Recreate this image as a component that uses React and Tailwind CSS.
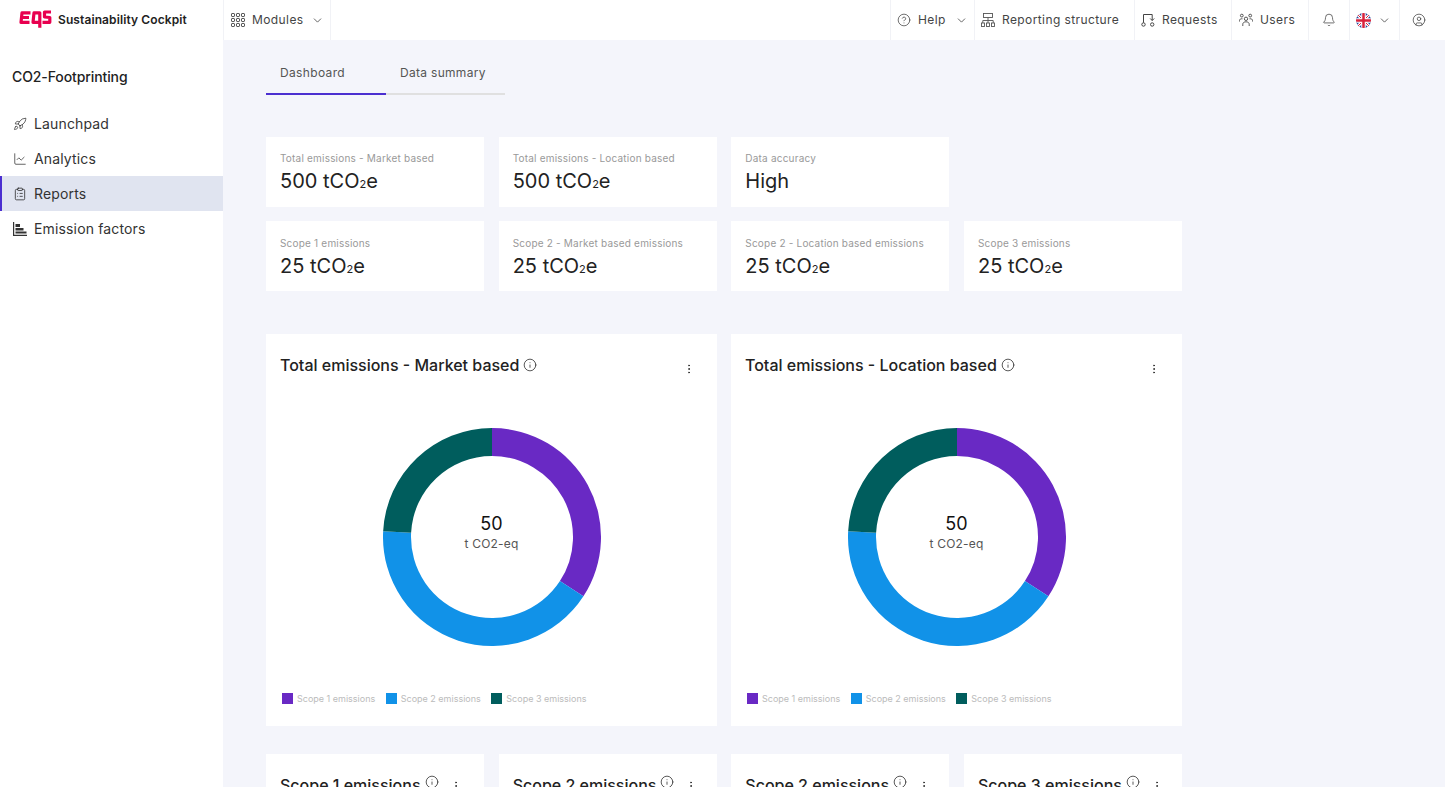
import { ChevronDown, CircleHelp, Bell, CircleUser, Rocket, ChartLine, ClipboardList, Info, EllipsisVertical } from 'lucide-react';

const ROW_ONE = [
  { label: 'Total emissions - Market based', value: '500 tCO' },
  { label: 'Total emissions - Location based', value: '500 tCO' },
  { label: 'Data accuracy', value: 'High', plain: true },
];

const ROW_TWO = [
  { label: 'Scope 1 emissions', value: '25 tCO' },
  { label: 'Scope 2 - Market based emissions', value: '25 tCO' },
  { label: 'Scope 2 - Location based emissions', value: '25 tCO' },
  { label: 'Scope 3 emissions', value: '25 tCO' },
];

const SEGMENTS = [
  { from: 0, to: 123, color: '#6929c4' },
  { from: 123, to: 273, color: '#1192e8' },
  { from: 273, to: 360, color: '#005d5d' },
];

const LEGEND = [
  { label: 'Scope 1 emissions', color: 'bg-[#6929c4]' },
  { label: 'Scope 2 emissions', color: 'bg-[#1192e8]' },
  { label: 'Scope 3 emissions', color: 'bg-[#005d5d]' },
];

function Logo() {
  return (
    <svg width="33" height="20" viewBox="0 0 33 20" fill="none" stroke="#e8004f" strokeWidth="3.2" strokeLinejoin="round">
      <path d="M11.5 2.8H3L2 12.3H10.5M2.5 7.5H10" />
      <path d="M15 2.8H20.8V12.3H14ZM20.8 12V17.8" />
      <path d="M32 2H25.5V7L30.8 7.5V12.3H23.5" />
    </svg>
  );
}

function ModulesIcon() {
  const spots = [0, 5, 10];
  return (
    <svg width="14" height="14" viewBox="0 0 14 14" fill="none" stroke="#333" strokeWidth="1">
      {spots.map((y) => spots.map((x) => <rect key={`${x}-${y}`} x={x + 0.5} y={y + 0.5} width="3" height="3" rx="0.8" />))}
    </svg>
  );
}

function StructureIcon() {
  return (
    <svg width="14" height="14" viewBox="0 0 14 14" fill="none" stroke="#555" strokeWidth="0.9">
      <rect x="2.5" y="0.5" width="9" height="4" />
      <path d="M7 4.5V7.5M1.8 10V7.5H12.2V10M7 7.5V10" />
      <rect x="0.5" y="10" width="3" height="3.5" />
      <rect x="5.5" y="10" width="3" height="3.5" />
      <rect x="10.5" y="10" width="3" height="3.5" />
    </svg>
  );
}

function RequestsIcon() {
  return (
    <svg width="14" height="14" viewBox="0 0 14 14" fill="none" stroke="#444" strokeWidth="1">
      <circle cx="2.5" cy="11.5" r="1.7" />
      <circle cx="11.2" cy="11.5" r="1.7" />
      <path d="M2.5 9.8V1.5H11.2V7.5M9.2 5.5L11.2 7.5L13.2 5.5" />
    </svg>
  );
}

function UsersIcon() {
  return (
    <svg width="14" height="14" viewBox="0 0 14 14" fill="none" stroke="#444" strokeWidth="0.9">
      <circle cx="7" cy="5.8" r="1.7" />
      <circle cx="2.8" cy="2.6" r="1.4" />
      <circle cx="11.2" cy="2.6" r="1.4" />
      <path d="M3.8 13V11.2C3.8 9.8 5 8.8 7 8.8C9 8.8 10.2 9.8 10.2 11.2V13" />
      <path d="M0.5 8.5V7.5C0.5 6.4 1.5 5.5 3.5 5.8M13.5 8.5V7.5C13.5 6.4 12.5 5.5 10.5 5.8" />
    </svg>
  );
}

function FactorsIcon() {
  return (
    <svg width="14" height="14" viewBox="0 0 14 14" fill="#333">
      <path d="M0 0H1.2V12.8H14V14H0Z" />
      <rect x="2.5" y="2" width="4.5" height="3" />
      <rect x="2.5" y="6" width="8" height="2.5" />
      <rect x="2.5" y="9.5" width="11" height="2" />
    </svg>
  );
}

function UkFlag() {
  return (
    <svg width="15" height="15" viewBox="0 0 15 15">
      <clipPath id="flag-clip"><circle cx="7.5" cy="7.5" r="7.5" /></clipPath>
      <g clipPath="url(#flag-clip)">
        <rect width="15" height="15" fill="#2b4a9b" />
        <path d="M0 0L15 15M15 0L0 15" stroke="#fff" strokeWidth="3" />
        <path d="M0 0L15 15M15 0L0 15" stroke="#d8213b" strokeWidth="1" />
        <path d="M7.5 0V15M0 7.5H15" stroke="#fff" strokeWidth="4.5" />
        <path d="M7.5 0V15M0 7.5H15" stroke="#d8213b" strokeWidth="2.5" />
      </g>
    </svg>
  );
}

function NavCell({ className, children }) {
  return (
    <div className={`flex h-full items-center border-l border-[#f1f2f6] text-[12px] tracking-[0.4px] text-[#444] ${className}`}>
      {children}
    </div>
  );
}

function Header() {
  return (
    <header className="flex h-10 shrink-0 items-center bg-white">
      <div className="flex w-[223px] shrink-0 items-center pl-[19px]">
        <Logo />
        <span className="ml-[6px] text-[12px] font-semibold tracking-[0.1px] text-[#222]">Sustainability Cockpit</span>
      </div>
      <NavCell className="w-[108px] border-r pl-[7px]">
        <ModulesIcon />
        <span className="ml-[7px]">Modules</span>
        <ChevronDown className="ml-[7px]" size={13} strokeWidth={1.5} />
      </NavCell>
      <div className="flex-1" />
      <NavCell className="w-[84px] pl-[6px]">
        <CircleHelp size={14} strokeWidth={1.3} />
        <span className="ml-[7px]">Help</span>
        <ChevronDown className="ml-[9px]" size={13} strokeWidth={1.5} />
      </NavCell>
      <NavCell className="w-[160px] pl-[6px]">
        <StructureIcon />
        <span className="ml-[7px]">Reporting structure</span>
      </NavCell>
      <NavCell className="w-[97px] pl-[6px]">
        <RequestsIcon />
        <span className="ml-[7px]">Requests</span>
      </NavCell>
      <NavCell className="w-[77px] pl-[7px]">
        <UsersIcon />
        <span className="ml-[7px]">Users</span>
      </NavCell>
      <NavCell className="w-[41px] justify-center">
        <Bell size={14} strokeWidth={1.3} />
      </NavCell>
      <NavCell className="w-[50px] pl-[6px]">
        <UkFlag />
        <ChevronDown className="ml-[7px]" size={13} strokeWidth={1.5} />
      </NavCell>
      <NavCell className="w-[46px] pl-[12px]">
        <CircleUser size={14} strokeWidth={1.3} />
      </NavCell>
    </header>
  );
}

function Sidebar() {
  const items = [
    { label: 'Launchpad', icon: <Rocket size={14} strokeWidth={1.2} className="text-[#222]" /> },
    { label: 'Analytics', icon: <ChartLine size={14} strokeWidth={1.2} className="text-[#222]" /> },
    { label: 'Reports', icon: <ClipboardList size={14} strokeWidth={1.3} className="text-[#222]" />, active: true },
    { label: 'Emission factors', icon: <FactorsIcon /> },
  ];

  return (
    <aside className="w-[223px] shrink-0 bg-white pt-[28px]">
      <h2 className="pl-3 text-[14px] leading-[18px] font-medium tracking-[-0.1px] text-[#222]">CO2-Footprinting</h2>
      <nav className="mt-[20px]">
        {items.map((item) => (
          <div
            key={item.label}
            className={`flex h-[35px] items-center gap-[7px] text-[14px] tracking-[0.15px] text-[#333] ${item.active ? 'border-l-2 border-[#4b2fd0] bg-[#e0e4f0] pl-[11px]' : 'pl-[13px]'}`}
          >
            {item.icon}
            <span>{item.label}</span>
          </div>
        ))}
      </nav>
    </aside>
  );
}

function MetricCard({ label, value, plain, top }) {
  return (
    <div className={`h-[70px] bg-white pl-[14px] ${top}`}>
      <div className="text-[10px] leading-[14px] tracking-[0.2px] text-[#999]">{label}</div>
      <div className="mt-[2px] text-[20px] leading-[28px] text-[#222]">
        {value}
        {!plain && (
          <>
            <span className="text-[11px]">2</span>e
          </>
        )}
      </div>
    </div>
  );
}

function arcPath(from, to) {
  const point = (angle, r) => {
    const rad = (angle * Math.PI) / 180;
    return `${109 + r * Math.sin(rad)} ${109 - r * Math.cos(rad)}`;
  };
  const large = to - from > 180 ? 1 : 0;
  return `M${point(from, 109)}A109 109 0 ${large} 1 ${point(to, 109)}L${point(to, 81)}A81 81 0 ${large} 0 ${point(from, 81)}Z`;
}

function ChartCard({ title }) {
  return (
    <div className="flex h-[392px] flex-col bg-white px-[14px]">
      <div className="flex h-[62px] items-center justify-between">
        <div className="flex items-center gap-[4px]">
          <span className="text-[16px] font-medium text-[#222]">{title}</span>
          <Info size={14} strokeWidth={1.4} className="text-[#333]" />
        </div>
        <EllipsisVertical size={12} className="mt-[8px] mr-[8px] text-[#333]" />
      </div>
      <div className="relative ml-[102.5px] mt-[32px] h-[218px] w-[218px]">
        <svg width="218" height="218" viewBox="0 0 218 218">
          {SEGMENTS.map((seg) => <path key={seg.color} d={arcPath(seg.from, seg.to)} fill={seg.color} />)}
        </svg>
        <div className="absolute inset-0 flex flex-col items-center justify-center pb-[10px]">
          <span className="text-[18px] leading-[24px] text-[#111]">50</span>
          <span className="text-[12px] leading-[16px] tracking-[0.2px] text-[#555]">t CO2-eq</span>
        </div>
      </div>
      <div className="mt-[46.5px] flex gap-[10.5px] pl-[2px]">
        {LEGEND.map((entry) => (
          <div key={entry.label} className="flex items-center gap-[4px]">
            <span className={`h-[11px] w-[11px] ${entry.color}`} />
            <span className="text-[9px] leading-[11px] text-[#bbb]">{entry.label}</span>
          </div>
        ))}
      </div>
    </div>
  );
}

function SmallCard({ title }) {
  return (
    <div className="h-[200px] bg-white px-[14px] pt-[20px]">
      <div className="flex items-start">
        <span className="text-[16px] leading-[22px] font-medium text-[#222]">{title}</span>
        <Info size={14} strokeWidth={1.4} className="ml-[4px] mt-[1px] text-[#333]" />
        <EllipsisVertical size={12} className="ml-[11px] mt-[6px] text-[#333]" />
      </div>
    </div>
  );
}

export default function App() {
  return (
    <div className="flex h-screen flex-col overflow-hidden bg-[#f4f5fb] font-['Inter',sans-serif]">
      <Header />
      <div className="flex min-h-0 flex-1">
        <Sidebar />
        <main className="min-w-0 flex-1 overflow-hidden pl-[43px]">
          <div className="flex">
            <div className="flex h-[55px] w-[120px] items-center border-b-2 border-[#4b2fd0] pl-[14px] pt-[13px] text-[12px] tracking-[0.35px] text-[#555]">Dashboard</div>
            <div className="flex h-[55px] w-[119px] items-center border-b-2 border-[#e0e0e0] pl-[14px] pt-[13px] text-[12px] tracking-[0.3px] text-[#555]">Data summary</div>
          </div>
          <div className="mt-[42px] grid w-[916px] grid-cols-4 gap-x-[14.67px] gap-y-[14px]">
            {ROW_ONE.map((card) => <MetricCard key={card.label} top="pt-[14px]" {...card} />)}
            <div />
            {ROW_TWO.map((card) => <MetricCard key={card.label} top="pt-[15px]" {...card} />)}
          </div>
          <div className="mt-[43px] grid w-[916px] grid-cols-2 gap-[14px]">
            <ChartCard title="Total emissions - Market based" />
            <ChartCard title="Total emissions - Location based" />
          </div>
          <div className="mt-[28px] grid w-[916px] grid-cols-4 gap-x-[14.67px]">
            <SmallCard title="Scope 1 emissions" />
            <SmallCard title="Scope 2 emissions" />
            <SmallCard title="Scope 2 emissions" />
            <SmallCard title="Scope 3 emissions" />
          </div>
        </main>
      </div>
    </div>
  );
}
